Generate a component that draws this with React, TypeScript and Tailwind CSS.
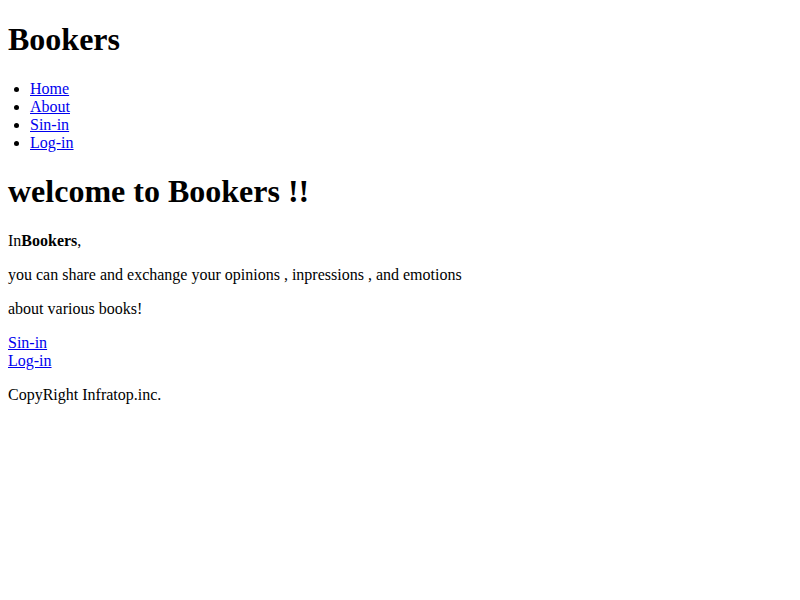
import React from "react";

export default function App() {
  const link = "text-[#0000ee] underline";
  return (
    <div className="bg-white text-black font-['Liberation_Serif',serif] text-[16px] leading-[normal] px-2 pb-2 min-h-[600px] flow-root">
      <h1 className="text-[32px] font-bold my-[21.44px]">Bookers</h1>
      <ul className="list-disc pl-[22px] my-4">
        <li><a href="#" className={link}>Home</a></li>
        <li><a href="#" className={link}>About</a></li>
        <li><a href="#" className={link}>Sin-in</a></li>
        <li><a href="#" className={link}>Log-in</a></li>
      </ul>
      <h1 className="text-[32px] font-bold my-[21.44px]">welcome to Bookers !!</h1>
      <p className="my-4">In<b className="font-bold">Bookers</b>,</p>
      <p className="my-4">you can share and exchange your opinions , inpressions , and emotions</p>
      <p className="my-4">about various books!</p>
      <div className="my-4">
        <a href="#" className={link}>Sin-in</a>
        <br />
        <a href="#" className={link}>Log-in</a>
      </div>
      <p className="my-4">CopyRight Infratop.inc.</p>
    </div>
  );
}
